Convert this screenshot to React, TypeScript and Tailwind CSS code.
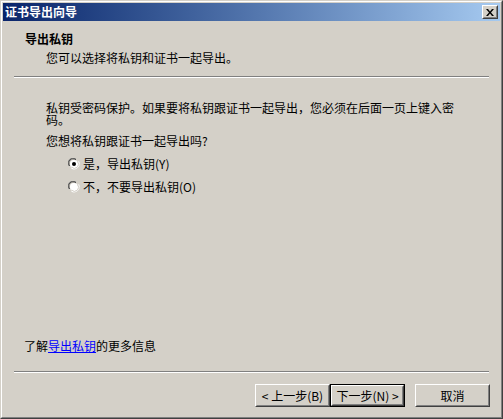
const FONT =
  "font-['SimSun','Noto_Sans_CJK_SC','Liberation_Sans',sans-serif]";

function Radio({ checked }: { checked?: boolean }) {
  return (
    <svg width="12" height="12" viewBox="0 0 12 12" className="shrink-0">
      <path d="M1 8 A5 5 0 0 1 8 1" fill="none" stroke="#808080" strokeWidth="1" />
      <path d="M2 8 A4 4 0 0 1 8 2" fill="none" stroke="#404040" strokeWidth="1" />
      <circle cx="6" cy="6" r="4" fill="#ffffff" />
      <path d="M3.5 10 A5 5 0 0 0 10.5 3.5" fill="none" stroke="#ffffff" strokeWidth="1.2" />
      <path d="M3.5 9 A4 4 0 0 0 9.5 3.5" fill="none" stroke="#d4d0c8" strokeWidth="1" />
      {checked && <circle cx="6" cy="6" r="2" fill="#000000" />}
    </svg>
  );
}

function Button({
  children,
  isDefault,
}: {
  children: React.ReactNode;
  isDefault?: boolean;
}) {
  const inner = (
    <div className="h-full w-full border border-t-white border-l-white border-r-[#404040] border-b-[#404040]">
      <div className="h-full w-full border border-t-transparent border-l-transparent border-r-[#808080] border-b-[#808080] flex items-center justify-center">
        {children}
      </div>
    </div>
  );
  if (isDefault) {
    return <div className="w-[75px] h-[23px] border border-black">{inner}</div>;
  }
  return <div className="w-[75px] h-[23px]">{inner}</div>;
}

function Separator() {
  return (
    <div className="mx-[11px] h-[2px] border-t border-t-[#808080] border-b border-b-white" />
  );
}

export default function App() {
  return (
    <div
      className={`w-[503px] h-[419px] bg-[#d4d0c8] border border-t-[#d4d0c8] border-l-[#d4d0c8] border-r-[#404040] border-b-[#404040] text-[12px] leading-[12px] text-black ${FONT}`}
    >
      <div className="h-full flex flex-col border border-t-white border-l-white border-r-[#808080] border-b-[#808080] p-px">
        {/* title bar */}
        <div className="h-[18px] flex items-center bg-gradient-to-r from-[#0a246a] to-[#a6caf0] pl-[2px] pr-[2px]">
          <span className="text-white font-bold text-[12px] leading-[12px]">证书导出向导</span>
          <div className="ml-auto w-[16px] h-[14px] bg-[#d4d0c8] border border-t-white border-l-white border-r-[#404040] border-b-[#404040]">
            <div className="h-full w-full border border-t-transparent border-l-transparent border-r-[#808080] border-b-[#808080] flex items-center justify-center">
              <svg width="8" height="7" viewBox="0 0 8 7">
                <path d="M0 0h2l2 2.5 2-2.5h2L5 3.5 8 7H6L4 4.5 2 7H0l3-3.5z" fill="#000" />
              </svg>
            </div>
          </div>
        </div>

        {/* header */}
        <div className="pt-[11px] pb-[12px]">
          <div className="pl-[22px] font-bold h-[13px] leading-[13px]">导出私钥</div>
          <div className="pl-[43px] mt-[7px]">您可以选择将私钥和证书一起导出。</div>
        </div>
        <Separator />

        {/* body */}
        <div className="ml-[43px] mt-[24px] w-[412px]">
          <p>私钥受密码保护。如果要将私钥跟证书一起导出，您必须在后面一页上键入密码。</p>
          <p className="mt-[9px]">您想将私钥跟证书一起导出吗?</p>
          <div className="ml-[22px] mt-[11px] flex flex-col gap-[11px]">
            <label className="flex items-center gap-[3px]">
              <Radio checked />
              <span>是，导出私钥(Y)</span>
            </label>
            <label className="flex items-center gap-[3px]">
              <Radio />
              <span>不，不要导出私钥(O)</span>
            </label>
          </div>
        </div>

        <div className="flex-1" />

        <div className="ml-[21px] mb-[19px]">
          了解<a className="text-[#0000ff] underline">导出私钥</a>的更多信息
        </div>
        <Separator />

        {/* buttons */}
        <div className="flex justify-end mr-[10px] mt-[11px] mb-[9px]">
          <Button>&lt; 上一步(B)</Button>
          <Button isDefault>下一步(N) &gt;</Button>
          <div className="ml-[10px]">
            <Button>取消</Button>
          </div>
        </div>
      </div>
    </div>
  );
}
